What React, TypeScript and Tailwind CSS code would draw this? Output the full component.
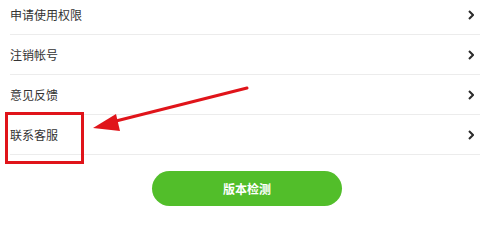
const rows = ['申请使用权限', '注销帐号', '意见反馈', '联系客服'];

function Chevron() {
  return (
    <svg width="6" height="10" viewBox="0 0 6 10" className="shrink-0">
      <polyline points="1,1 5,5 1,9" fill="none" stroke="#2b2b2b" strokeWidth="2" strokeLinejoin="miter" />
    </svg>
  );
}

export default function App() {
  return (
    <div
      className="relative w-[480px] h-[213px] overflow-hidden bg-white"
      style={{ fontFamily: '"Noto Sans CJK SC", "Noto Sans", sans-serif' }}
    >
      <div className="-mt-[5px]">
        {rows.map((label) => (
          <div key={label} className="ml-[10px] h-10 flex items-center justify-between pr-[6px] border-b border-[#ececec]">
            <span className="text-[12px] leading-none text-[#333]">{label}</span>
            <Chevron />
          </div>
        ))}
      </div>

      <button className="mt-[16px] ml-[152px] w-[190px] h-[35px] rounded-full bg-[#52be2a] text-white text-[12px] font-bold flex items-center justify-center">
        版本检测
      </button>

      {/* annotation overlay */}
      <svg className="absolute inset-0 pointer-events-none" width="480" height="213" viewBox="0 0 480 213">
        <rect x="6.5" y="113.5" width="76" height="49" fill="none" stroke="#e0141a" strokeWidth="3" />
        <line x1="247" y1="88" x2="112" y2="122" stroke="#e0141a" strokeWidth="3" strokeLinecap="round" />
        <polygon points="93,128 116,114 120,131" fill="#e0141a" />
      </svg>
    </div>
  );
}
